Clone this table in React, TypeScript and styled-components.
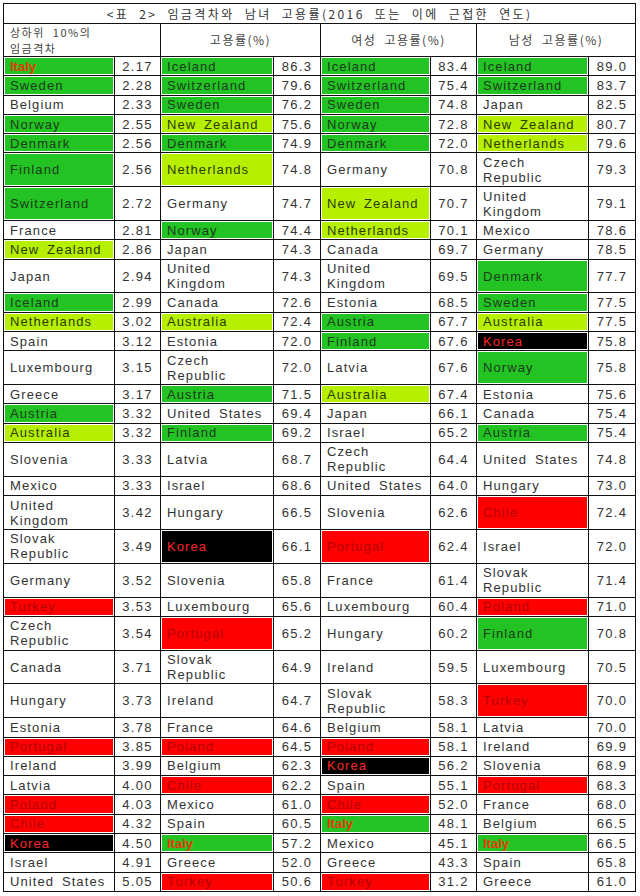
import React from "react";
import styled, { createGlobalStyle } from "styled-components";

type Tone = "" | "g" | "y" | "r" | "k" | "i";
type Entry = [string, string, Tone];

// 4 rankings side by side: wage gap, employment, female, male
const rows: Entry[][] = [
  [["Italy", "2.17", "i"], ["Iceland", "86.3", "g"], ["Iceland", "83.4", "g"], ["Iceland", "89.0", "g"]],
  [["Sweden", "2.28", "g"], ["Switzerland", "79.6", "g"], ["Switzerland", "75.4", "g"], ["Switzerland", "83.7", "g"]],
  [["Belgium", "2.33", ""], ["Sweden", "76.2", "g"], ["Sweden", "74.8", "g"], ["Japan", "82.5", ""]],
  [["Norway", "2.55", "g"], ["New Zealand", "75.6", "y"], ["Norway", "72.8", "g"], ["New Zealand", "80.7", "y"]],
  [["Denmark", "2.56", "g"], ["Denmark", "74.9", "g"], ["Denmark", "72.0", "g"], ["Netherlands", "79.6", "y"]],
  [["Finland", "2.56", "g"], ["Netherlands", "74.8", "y"], ["Germany", "70.8", ""], ["Czech\nRepublic", "79.3", ""]],
  [["Switzerland", "2.72", "g"], ["Germany", "74.7", ""], ["New Zealand", "70.7", "y"], ["United\nKingdom", "79.1", ""]],
  [["France", "2.81", ""], ["Norway", "74.4", "g"], ["Netherlands", "70.1", "y"], ["Mexico", "78.6", ""]],
  [["New Zealand", "2.86", "y"], ["Japan", "74.3", ""], ["Canada", "69.7", ""], ["Germany", "78.5", ""]],
  [["Japan", "2.94", ""], ["United\nKingdom", "74.3", ""], ["United\nKingdom", "69.5", ""], ["Denmark", "77.7", "g"]],
  [["Iceland", "2.99", "g"], ["Canada", "72.6", ""], ["Estonia", "68.5", ""], ["Sweden", "77.5", "g"]],
  [["Netherlands", "3.02", "y"], ["Australia", "72.4", "y"], ["Austria", "67.7", "g"], ["Australia", "77.5", "y"]],
  [["Spain", "3.12", ""], ["Estonia", "72.0", ""], ["Finland", "67.6", "g"], ["Korea", "75.8", "k"]],
  [["Luxembourg", "3.15", ""], ["Czech\nRepublic", "72.0", ""], ["Latvia", "67.6", ""], ["Norway", "75.8", "g"]],
  [["Greece", "3.17", ""], ["Austria", "71.5", "g"], ["Australia", "67.4", "y"], ["Estonia", "75.6", ""]],
  [["Austria", "3.32", "g"], ["United States", "69.4", ""], ["Japan", "66.1", ""], ["Canada", "75.4", ""]],
  [["Australia", "3.32", "y"], ["Finland", "69.2", "g"], ["Israel", "65.2", ""], ["Austria", "75.4", "g"]],
  [["Slovenia", "3.33", ""], ["Latvia", "68.7", ""], ["Czech\nRepublic", "64.4", ""], ["United States", "74.8", ""]],
  [["Mexico", "3.33", ""], ["Israel", "68.6", ""], ["United States", "64.0", ""], ["Hungary", "73.0", ""]],
  [["United\nKingdom", "3.42", ""], ["Hungary", "66.5", ""], ["Slovenia", "62.6", ""], ["Chile", "72.4", "r"]],
  [["Slovak\nRepublic", "3.49", ""], ["Korea", "66.1", "k"], ["Portugal", "62.4", "r"], ["Israel", "72.0", ""]],
  [["Germany", "3.52", ""], ["Slovenia", "65.8", ""], ["France", "61.4", ""], ["Slovak\nRepublic", "71.4", ""]],
  [["Turkey", "3.53", "r"], ["Luxembourg", "65.6", ""], ["Luxembourg", "60.4", ""], ["Poland", "71.0", "r"]],
  [["Czech\nRepublic", "3.54", ""], ["Portugal", "65.2", "r"], ["Hungary", "60.2", ""], ["Finland", "70.8", "g"]],
  [["Canada", "3.71", ""], ["Slovak\nRepublic", "64.9", ""], ["Ireland", "59.5", ""], ["Luxembourg", "70.5", ""]],
  [["Hungary", "3.73", ""], ["Ireland", "64.7", ""], ["Slovak\nRepublic", "58.3", ""], ["Turkey", "70.0", "r"]],
  [["Estonia", "3.78", ""], ["France", "64.6", ""], ["Belgium", "58.1", ""], ["Latvia", "70.0", ""]],
  [["Portugal", "3.85", "r"], ["Poland", "64.5", "r"], ["Poland", "58.1", "r"], ["Ireland", "69.9", ""]],
  [["Ireland", "3.99", ""], ["Belgium", "62.3", ""], ["Korea", "56.2", "k"], ["Slovenia", "68.9", ""]],
  [["Latvia", "4.00", ""], ["Chile", "62.2", "r"], ["Spain", "55.1", ""], ["Portugal", "68.3", "r"]],
  [["Poland", "4.03", "r"], ["Mexico", "61.0", ""], ["Chile", "52.0", "r"], ["France", "68.0", ""]],
  [["Chile", "4.32", "r"], ["Spain", "60.5", ""], ["Italy", "48.1", "i"], ["Belgium", "66.5", ""]],
  [["Korea", "4.50", "k"], ["Italy", "57.2", "i"], ["Mexico", "45.1", ""], ["Italy", "66.5", "i"]],
  [["Israel", "4.91", ""], ["Greece", "52.0", ""], ["Greece", "43.3", ""], ["Spain", "65.8", ""]],
  [["United States", "5.05", ""], ["Turkey", "50.6", "r"], ["Turkey", "31.2", "r"], ["Greece", "61.0", ""]],
];

const tones: Record<Tone, { bg: string; fg: string }> = {
  "": { bg: "#ffffff", fg: "#333333" },
  g: { bg: "#22c322", fg: "#1d3b1d" },
  y: { bg: "#b6f000", fg: "#2c3a00" },
  r: { bg: "#ff0000", fg: "#b40000" },
  k: { bg: "#000000", fg: "#ff2626" },
  i: { bg: "#22c322", fg: "#e8380a" },
};

const widths = [111, 46, 113, 47, 110, 46, 112, 47];

export default function App() {
  return (
    <Page>
      <GlobalStyle />
      <Table>
        <colgroup>
          {widths.map((w, i) => (
            <col key={i} style={{ width: w }} />
          ))}
        </colgroup>
        <thead>
          <TitleRow>
            <Title colSpan={8}>
              &lt;표 2&gt; 임금격차와 남녀 고용률(2016 또는 이에 근접한 연도)
            </Title>
          </TitleRow>
          <HeadRow>
            <Head colSpan={2} $left>
              상하위 10%의{"\n"}임금격차
            </Head>
            <Head colSpan={2}>고용률(%)</Head>
            <Head colSpan={2}>여성 고용률(%)</Head>
            <Head colSpan={2}>남성 고용률(%)</Head>
          </HeadRow>
        </thead>
        <tbody>
          {rows.map((row, r) => {
            const tall = row.some((e) => e[0].includes("\n"));
            return (
              <Row key={r} $tall={tall}>
                {row.map(([name, value, tone], c) => (
                  <React.Fragment key={c}>
                    <Name $tone={tone}>{name}</Name>
                    <Value>{value}</Value>
                  </React.Fragment>
                ))}
              </Row>
            );
          })}
        </tbody>
      </Table>
    </Page>
  );
}

const GlobalStyle = createGlobalStyle`
  body {
    margin: 0;
    background: #ffffff;
    font-family: "Liberation Sans", Arial, sans-serif;
  }
`;

const Page = styled.div`
  padding: 3px 0 0 3px;
`;

const Table = styled.table`
  border-collapse: collapse;
  table-layout: fixed;
  width: 632px;
  border: 1px solid #111;
`;

const TitleRow = styled.tr`
  height: 20px;
`;

const HeadRow = styled.tr`
  height: 33px;
`;

const Title = styled.th`
  padding: 0;
  border: 1px solid #111;
  font: 400 12px/16px "Noto Sans CJK KR", sans-serif;
  letter-spacing: 2.4px;
  word-spacing: 5px;
  color: #333;
  text-align: center;
`;

const Head = styled.th<{ $left?: boolean }>`
  padding: 0 ${(p) => (p.$left ? "6px" : "0")};
  border: 1px solid #111;
  font: 400 ${(p) => (p.$left ? "11px/16px" : "12px/16px")} "Noto Sans CJK KR", sans-serif;
  letter-spacing: 1.5px;
  word-spacing: 4px;
  color: #444;
  white-space: pre-line;
  text-align: ${(p) => (p.$left ? "left" : "center")};
  vertical-align: ${(p) => (p.$left ? "top" : "middle")};
`;

const Row = styled.tr<{ $tall: boolean }>`
  height: ${(p) => (p.$tall ? "33.8px" : "19.3px")};
`;

const Name = styled.td<{ $tone: Tone }>`
  padding: 0 2px 0 6px;
  border: 1px solid #111;
  background: ${(p) => tones[p.$tone].bg};
  color: ${(p) => tones[p.$tone].fg};
  box-shadow: inset 0 0 0 1px #fff;
  font-size: 13px;
  line-height: 15px;
  font-weight: ${(p) => (p.$tone === "i" ? 700 : 400)};
  letter-spacing: ${(p) => (p.$tone === "i" ? "0" : "1.1px")};
  word-spacing: 3px;
  white-space: pre-line;
  overflow: hidden;
`;

const Value = styled.td`
  padding: 0;
  border: 1px solid #111;
  color: #333;
  font-size: 13px;
  letter-spacing: 1.3px;
  text-align: center;
`;
